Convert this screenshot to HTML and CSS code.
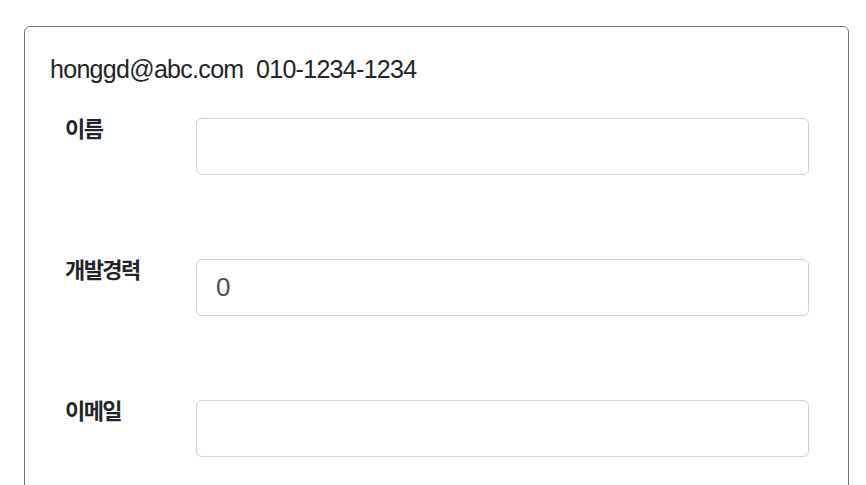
FILE: index.html
```html
<!DOCTYPE html>
<html lang="ko">
<head>
<meta charset="utf-8">
<link rel="stylesheet" href="styles.css">
</head>
<body>
<div class="page">
  <div class="card">
    <div class="contact">honggd@abc.com&nbsp;&nbsp;010-1234-1234</div>
    <div class="row">
      <label class="label">이름</label>
      <div class="input"></div>
    </div>
    <div class="row">
      <label class="label">개발경력</label>
      <div class="input">0</div>
    </div>
    <div class="row">
      <label class="label">이메일</label>
      <div class="input"></div>
    </div>
  </div>
</div>
</body>
</html>
```
FILE: styles.css
```css
html, body {
  margin: 0;
  padding: 0;
  background: #ffffff;
  overflow: hidden;
}
.page {
  padding: 26px 17px 0 24px;
}
.card {
  border: 1px solid #6c757d;
  border-radius: 6px;
  padding: 24px 39px 40px 25px;
  min-height: 600px;
}
.contact {
  font-family: "Liberation Sans", Arial, sans-serif;
  font-size: 25px;
  letter-spacing: -0.7px;
  line-height: 36px;
  color: #212529;
}
.row {
  display: flex;
  align-items: flex-start;
  margin-top: 31px;
}
.row + .row {
  margin-top: 84px;
}
.label {
  width: 146px;
  flex-shrink: 0;
  padding-left: 15px;
  font-family: "Noto Sans CJK KR", sans-serif;
  font-weight: 700;
  font-size: 22px;
  letter-spacing: -1.6px;
  line-height: 26px;
  color: #212529;
  box-sizing: border-box;
  margin-top: -4px;
}
.input {
  flex: 1;
  height: 57px;
  box-sizing: border-box;
  border: 1px solid #ced4da;
  border-radius: 6px;
  padding: 0 19px;
  font-family: "Liberation Sans", Arial, sans-serif;
  font-size: 26px;
  line-height: 55px;
  color: #495057;
}
```
